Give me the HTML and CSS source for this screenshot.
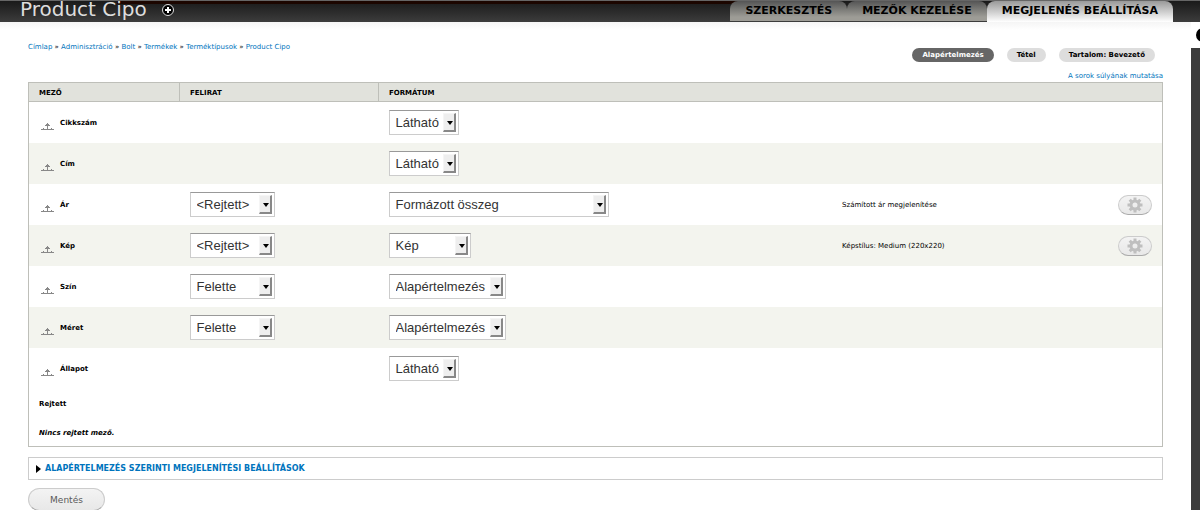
FILE: index.html
```
<!DOCTYPE html>
<html lang="hu">
<head>
    <meta charset="UTF-8">
    <meta name="viewport" content="width=device-width, initial-scale=1.0">
    <title>Product Cipo</title>
    <link rel="stylesheet" href="styles.css">
</head>
<body>

<!-- Icons used more than once -->
<svg class="sprite" aria-hidden="true">
    <symbol id="handle" viewBox="0 0 13 7">
        <path d="M0 6h13v1H0zM6 0h1v6H6zM5 1h3v1H5zM4 2h5v1H4zM2 5h1v1H2zM10 5h1v1h-1z"/>
    </symbol>
    <symbol id="cog" viewBox="0 0 16 16">
        <circle cx="8" cy="8" r="4" fill="none" stroke="#bfbfbf" stroke-width="3"/>
        <path d="M8 0.500v3M8 12.500v3M0.500 8h3M12.500 8h3M2.700 2.700l2 2M11.300 11.300l2 2M13.300 2.700l-2 2M4.700 11.300l-2 2" stroke="#bfbfbf" stroke-width="3"/>
    </symbol>
</svg>

<header class="titlebar">
    <h1>Product Cipo</h1>
    <a class="shortcut" href="#" aria-label="Hozzáadás">
        <svg viewBox="0 0 12 12"><circle cx="6" cy="6" r="5.500" fill="#000" stroke="#ddd"/><path d="M5 3h2v2h2v2H7v2H5V7H3V5h2z" fill="#fff"/></svg>
    </a>
    <nav class="tabs">
        <a href="#">SZERKESZTÉS</a>
        <a href="#">MEZŐK KEZELÉSE</a>
        <a href="#" class="active">MEGJELENÉS BEÁLLÍTÁSA</a>
    </nav>
</header>

<div class="page">
    <main class="content">
        <nav class="breadcrumb">
            <a href="#">Címlap</a> » <a href="#">Adminisztráció</a> » <a href="#">Bolt</a> » <a href="#">Termékek</a> » <a href="#">Terméktípusok</a> » <a href="#">Product Cipo</a>
        </nav>
        <nav class="modes">
            <a href="#" class="active">Alapértelmezés</a>
            <a href="#">Tétel</a>
            <a href="#">Tartalom: Bevezető</a>
        </nav>

        <form>
            <div class="weights"><a href="#">A sorok súlyának mutatása</a></div>
            <table class="fields">
                <thead>
                    <tr>
                        <th class="col-name">MEZŐ</th>
                        <th class="col-label">FELIRAT</th>
                        <th class="col-format">FORMÁTUM</th>
                        <th class="col-summary"></th>
                        <th class="col-cog"></th>
                    </tr>
                </thead>
                <tbody>
                    <tr>
                        <td><div class="name"><svg class="handle"><use href="#handle"/></svg>Cikkszám</div></td>
                        <td></td>
                        <td><span class="select short"><select aria-label="Cikkszám formátum"><option>Látható</option></select></span></td>
                        <td></td>
                        <td></td>
                    </tr>
                    <tr>
                        <td><div class="name"><svg class="handle"><use href="#handle"/></svg>Cím</div></td>
                        <td></td>
                        <td><span class="select short"><select aria-label="Cím formátum"><option>Látható</option></select></span></td>
                        <td></td>
                        <td></td>
                    </tr>
                    <tr>
                        <td><div class="name"><svg class="handle"><use href="#handle"/></svg>Ár</div></td>
                        <td><span class="select label"><select aria-label="Ár felirat"><option>&lt;Rejtett&gt;</option></select></span></td>
                        <td><span class="select price"><select aria-label="Ár formátum"><option>Formázott összeg</option></select></span></td>
                        <td class="summary">Számított ár megjelenítése</td>
                        <td class="ops"><button type="button" class="cog" aria-label="Ár beállításai"><svg><use href="#cog"/></svg></button></td>
                    </tr>
                    <tr>
                        <td><div class="name"><svg class="handle"><use href="#handle"/></svg>Kép</div></td>
                        <td><span class="select label"><select aria-label="Kép felirat"><option>&lt;Rejtett&gt;</option></select></span></td>
                        <td><span class="select image"><select aria-label="Kép formátum"><option>Kép</option></select></span></td>
                        <td class="summary">Képstílus: Medium (220x220)</td>
                        <td class="ops"><button type="button" class="cog" aria-label="Kép beállításai"><svg><use href="#cog"/></svg></button></td>
                    </tr>
                    <tr>
                        <td><div class="name"><svg class="handle"><use href="#handle"/></svg>Szín</div></td>
                        <td><span class="select label"><select aria-label="Szín felirat"><option>Felette</option></select></span></td>
                        <td><span class="select default"><select aria-label="Szín formátum"><option>Alapértelmezés</option></select></span></td>
                        <td></td>
                        <td></td>
                    </tr>
                    <tr>
                        <td><div class="name"><svg class="handle"><use href="#handle"/></svg>Méret</div></td>
                        <td><span class="select label"><select aria-label="Méret felirat"><option>Felette</option></select></span></td>
                        <td><span class="select default"><select aria-label="Méret formátum"><option>Alapértelmezés</option></select></span></td>
                        <td></td>
                        <td></td>
                    </tr>
                    <tr>
                        <td><div class="name"><svg class="handle"><use href="#handle"/></svg>Állapot</div></td>
                        <td></td>
                        <td><span class="select short"><select aria-label="Állapot formátum"><option>Látható</option></select></span></td>
                        <td></td>
                        <td></td>
                    </tr>
                    <tr class="region">
                        <td colspan="5">Rejtett</td>
                    </tr>
                    <tr class="region empty">
                        <td colspan="5">Nincs rejtett mező.</td>
                    </tr>
                </tbody>
            </table>

            <details class="settings">
                <summary>ALAPÉRTELMEZÉS SZERINTI MEGJELENÍTÉSI BEÁLLÍTÁSOK</summary>
            </details>

            <button type="submit" class="save">Mentés</button>
        </form>
    </main>
    <aside class="edge">
        <button type="button" class="close" aria-label="Bezárás"></button>
    </aside>
</div>

</body>
</html>
```

FILE: styles.css
```
*,
*::before,
*::after {
    box-sizing: border-box;
}
body {
    margin: 0;
    font-family: "DejaVu Sans", sans-serif;
    font-size: 7px;
    color: #000;
    background: #fff;
    overflow-x: hidden;
}
html {
    scrollbar-width: none;
}
a {
    color: #0074bd;
    text-decoration: none;
}
.sprite {
    display: none;
}

/* Dark title bar with the main tabs */
.titlebar {
    display: flex;
    align-items: flex-start;
    height: 22px;
    padding: 0 27px 0 20px;
    border-top: 1px solid #666;
    background: linear-gradient(#1c0600, #1c0600) 117px 0 / 700px 3px no-repeat, linear-gradient(#1a1a1a, #3c3c3c);
}
.titlebar h1 {
    margin: 0;
    font-size: 20px;
    font-weight: normal;
    line-height: 16px;
    color: #ddd;
}
.shortcut {
    margin: 3px 0 0 15px;
}
.shortcut svg {
    display: block;
    width: 12px;
    height: 12px;
}
.tabs {
    display: flex;
    margin-left: auto;
}
.tabs a {
    height: 20px;
    padding: 0 15px;
    border-radius: 8px 8px 0 0;
    font-size: 11px;
    font-weight: bold;
    line-height: 19px;
    color: #000;
    background: linear-gradient(#555, #9d9c96 16px);
}
.tabs a.active {
    height: 21px;
    background: linear-gradient(#999, #fff);
}

.page {
    display: flex;
    align-items: stretch;
}
.content {
    flex: 1;
    padding: 20px 28px 0;
    background: linear-gradient(#f5f5f5, #fff 8px);
}
.edge {
    width: 9px;
    min-height: 488px;
    padding-top: 26px;
    background: #3b3b3b content-box;
    overflow: hidden;
    position: relative;
}
.close {
    position: absolute;
    top: 6px;
    left: 5px;
    width: 14px;
    height: 14px;
    padding: 0;
    border: 0;
    border-radius: 50%;
    background: #000;
}

.breadcrumb {
    line-height: 10px;
}
.modes {
    display: flex;
    justify-content: flex-end;
    gap: 13px;
    margin: -4px 8px 0 0;
}
.modes a {
    padding: 0 10px;
    border-radius: 7px;
    font-weight: bold;
    line-height: 14px;
    color: #000;
    background: #ddd;
}
.modes a.active {
    color: #fff;
    background: #666;
}
.weights {
    padding-top: 8px;
    line-height: 12px;
    text-align: right;
}

/* Field table */
.fields {
    width: 100%;
    border: 1px solid #bebfb9;
    border-collapse: collapse;
    table-layout: fixed;
}
.fields th {
    height: 19px;
    padding: 1px 10px 0;
    border-bottom: 1px solid #bebfb9;
    text-align: left;
    background: #e1e2dc;
}
.fields .col-name {
    width: 151px;
}
.fields .col-label {
    width: 199px;
}
.fields .col-format {
    width: 40%;
}
.fields .col-label,
.fields .col-format {
    border-left: 1px solid #bebfb9;
}
.fields .col-cog {
    width: 64px;
}
.fields td {
    height: 41px;
    padding: 0 10px;
}
.fields tbody tr:nth-child(even) {
    background: #f3f4ee;
}
.name {
    display: flex;
    align-items: center;
    gap: 6px;
    padding: 1px 0 0 2px;
    font-weight: bold;
}
.handle {
    width: 13px;
    height: 7px;
    margin-top: 7px;
    fill: #888;
}
.fields .region td {
    height: 29px;
    padding-top: 2px;
    font-weight: bold;
    background: #fff;
}
.fields .empty td {
    font-style: italic;
}

/* Drop-downs with a raised arrow button */
.select {
    display: inline-block;
    position: relative;
    vertical-align: middle;
}
.select select {
    display: block;
    width: 100%;
    height: 25px;
    padding: 0 6px;
    border: 1px solid #ccc;
    border-top-color: #999;
    border-radius: 0;
    appearance: none;
    font-family: "Liberation Sans", sans-serif;
    font-size: 13px;
    color: #333;
    background: #fff;
}
.select::before {
    content: "";
    position: absolute;
    top: 3px;
    right: 3px;
    width: 13px;
    height: 19px;
    border: 1px solid #f5f5f5;
    border-right: 2px solid #888;
    border-bottom: 2px solid #888;
    background: #eee;
    pointer-events: none;
}
.select::after {
    content: "";
    position: absolute;
    top: 11px;
    right: 6px;
    border: 3px solid transparent;
    border-top: 4px solid #000;
    border-bottom: 0;
    pointer-events: none;
}
.short {
    width: 70px;
}
.label {
    width: 85px;
}
.price {
    width: 220px;
}
.image {
    width: 82px;
}
.default {
    width: 117px;
}

.fields .summary,
.fields .ops {
    padding-top: 2px;
}
.ops {
    text-align: right;
}
.cog {
    width: 34px;
    height: 20px;
    padding: 0;
    border: 1px solid #ccc;
    border-bottom-color: #aaa;
    border-radius: 10px;
    vertical-align: middle;
    background: linear-gradient(#f3f3f3, #e8e8e8);
}
.cog svg {
    display: block;
    width: 16px;
    height: 16px;
    margin: 0 auto;
}

.settings {
    margin-top: 10px;
    border: 1px solid #ccc;
}
.settings summary {
    display: flex;
    align-items: center;
    gap: 4px;
    height: 21px;
    padding-left: 7px;
    font-size: 8px;
    font-weight: bold;
    color: #0074bd;
}
.settings summary::before {
    content: "";
    border: 4px solid transparent;
    border-left: 5px solid #000;
    border-right: 0;
}
.save {
    display: block;
    width: 77px;
    height: 23px;
    margin-top: 8px;
    border: 1px solid #ccc;
    border-bottom-color: #aaa;
    border-radius: 12px;
    font-family: inherit;
    font-size: 9px;
    color: #5a5a5a;
    background: linear-gradient(#f3f3f3, #e8e8e8);
}
```
